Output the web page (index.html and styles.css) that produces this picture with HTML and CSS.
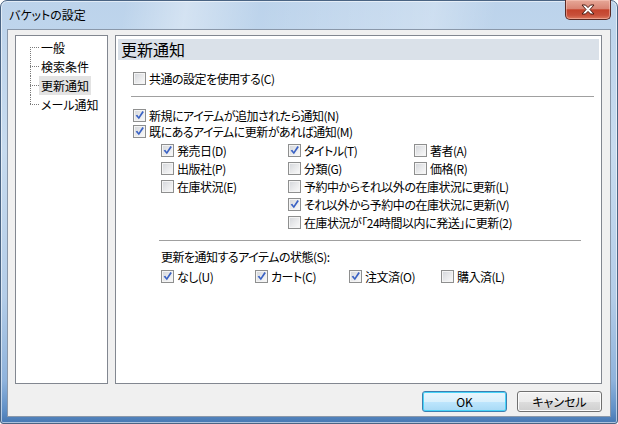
FILE: index.html
```html
<!DOCTYPE html>
<html lang="ja">
<head>
    <meta charset="UTF-8">
    <title>バケットの設定</title>
    <link rel="stylesheet" href="styles.css">
</head>
<body>
    <div class="window">
        <div class="titlebar">
            <span class="title">バケットの設定</span>
            <div class="close">
                <svg width="16" height="11" viewBox="0 0 16 11">
                    <path d="M2 1 H5.5 L8 3.6 L10.5 1 H14 L10 5.5 L14 10 H10.5 L8 7.4 L5.5 10 H2 L6 5.5 Z" fill="#fff" stroke="#4a1a12" stroke-width="1"/>
                </svg>
            </div>
        </div>

        <div class="client">
            <div class="panes">
                <!--左のツリー-->
                <ul class="tree">
                    <li class="first"><span class="branch"></span><span class="node">一般</span></li>
                    <li><span class="branch"></span><span class="node">検索条件</span></li>
                    <li><span class="branch"></span><span class="node selected">更新通知</span></li>
                    <li class="last"><span class="branch"></span><span class="node">メール通知</span></li>
                </ul>

                <!--右のページ-->
                <div class="page">
                    <div class="page-head">更新通知</div>
                    <div class="page-body">
                        <label class="chk row-common"><span class="box"></span>共通の設定を使用する(C)</label>
                        <div class="sep sep-top"></div>
                        <label class="chk row-new"><span class="box on"></span>新規にアイテムが追加されたら通知(N)</label>
                        <label class="chk"><span class="box on"></span>既にあるアイテムに更新があれば通知(M)</label>

                        <div class="fields">
                            <label class="chk"><span class="box on"></span>発売日(D)</label>
                            <label class="chk"><span class="box on"></span>タイトル(T)</label>
                            <label class="chk"><span class="box"></span>著者(A)</label>

                            <label class="chk"><span class="box"></span>出版社(P)</label>
                            <label class="chk"><span class="box"></span>分類(G)</label>
                            <label class="chk"><span class="box"></span>価格(R)</label>

                            <label class="chk"><span class="box"></span>在庫状況(E)</label>
                            <label class="chk wide"><span class="box"></span>予約中からそれ以外の在庫状況に更新(L)</label>

                            <label class="chk wide"><span class="box on"></span>それ以外から予約中の在庫状況に更新(V)</label>
                            <label class="chk wide"><span class="box"></span>在庫状況が「24時間以内に発送」に更新(2)</label>
                        </div>

                        <div class="state">
                            <div class="sep"></div>
                            <div class="caption">更新を通知するアイテムの状態(S):</div>
                            <div class="state-row">
                                <label class="chk"><span class="box on"></span>なし(U)</label>
                                <label class="chk"><span class="box on"></span>カート(C)</label>
                                <label class="chk"><span class="box on"></span>注文済(O)</label>
                                <label class="chk"><span class="box"></span>購入済(L)</label>
                            </div>
                        </div>
                    </div>
                </div>
            </div>

            <div class="buttons">
                <button class="btn default">OK</button>
                <button class="btn">キャンセル</button>
            </div>
        </div>
    </div>
</body>
</html>
```

FILE: styles.css
```css
* {
  margin: 0;
  padding: 0;
  box-sizing: border-box;
  list-style: none;
}

body {
  width: 618px;
  height: 424px;
  background: #fff;
  font-family: "Noto Sans CJK JP", "Liberation Sans", sans-serif;
  font-size: 12px;
  color: #000;
  font-feature-settings: "palt";
  overflow: hidden;
}

/* ウィンドウ枠 */
.window {
  width: 618px;
  height: 424px;
  display: flex;
  flex-direction: column;
  border: 1px solid #4a6483;
  border-radius: 7px 7px 3px 3px;
  padding: 0 6px 6px 6px;
  background: linear-gradient(to bottom, #bcd3eb 0%, #c7dbef 35%, #b4cde8 70%, #8fb3dc 90%, #5f8fc6 97%, #4677b2 100%);
  box-shadow: inset 0 0 0 1px rgba(255, 255, 255, 0.55);
}

.titlebar {
  height: 28px;
  display: flex;
  align-items: flex-start;
  background: linear-gradient(100deg, rgba(255,255,255,0) 20%, rgba(255,255,255,0.35) 30%, rgba(255,255,255,0) 42%, rgba(255,255,255,0.25) 70%, rgba(255,255,255,0) 80%);
  margin: 0 -6px;
  padding: 0 6px;
}

.title {
  margin: 6px 0 0 2px;
  line-height: 16px;
  font-size: 12px;
  color: #000;
}

.close {
  margin-left: auto;
  margin-top: -1px;
  width: 46px;
  height: 20px;
  border: 1px solid #5a2a24;
  border-top: 0;
  border-radius: 0 0 5px 5px;
  background: linear-gradient(to bottom, #e6a898 0%, #d98574 45%, #c4432c 52%, #c8503a 80%, #dd7a5f 100%);
  box-shadow: inset 0 0 0 1px rgba(255, 210, 200, 0.45);
  display: flex;
  align-items: center;
  justify-content: center;
}

/* クライアント領域 */
.client {
  flex: 1;
  display: flex;
  flex-direction: column;
  border: 1px solid #8a98aa;
  background: #f0f0f0;
  padding: 5px 8px 4px 7px;
}

.panes {
  height: 349px;
  display: flex;
  gap: 7px;
}

.tree {
  width: 93px;
  border: 1px solid #828790;
  background: #fff;
  padding: 2px 0 0 14px;
}

.tree li {
  height: 19px;
  display: flex;
  align-items: center;
}

.branch {
  width: 9px;
  height: 19px;
  background-image:
    repeating-linear-gradient(to bottom, #7a7a7a 0 1px, transparent 1px 2px),
    repeating-linear-gradient(to right, #7a7a7a 0 1px, transparent 1px 2px);
  background-repeat: no-repeat;
  background-size: 1px 19px, 9px 1px;
  background-position: 0 0, 0 9px;
}

.tree li.first .branch {
  background-size: 1px 10px, 9px 1px;
  background-position: 0 9px, 0 9px;
}

.tree li.last .branch {
  background-size: 1px 10px, 9px 1px;
  background-position: 0 0, 0 9px;
}

.node {
  padding: 0 2px;
  line-height: 19px;
  height: 19px;
}

.node.selected {
  background: #e3e3e3;
}

.page {
  flex: 1;
  border: 1px solid #828790;
  background: #fff;
  padding: 3px 2px;
}

.page-head {
  height: 21px;
  line-height: 21px;
  padding-left: 3px;
  font-size: 16px;
  background: #dae1e9;
}

.page-body {
  padding: 0 5px 0 15px;
  letter-spacing: -0.5px;
}

/* チェックボックス */
.chk {
  display: flex;
  align-items: center;
  height: 16px;
  gap: 3px;
  white-space: nowrap;
}

.box {
  width: 13px;
  height: 13px;
  flex: none;
  border: 1px solid #8e8f8f;
  background: linear-gradient(135deg, #d2d5da 0%, #e6e7e9 45%, #fbfbfb 100%);
  box-shadow: inset 0 0 0 1px #f4f4f4;
}

.box.on {
  background-image:
    url("data:image/svg+xml;utf8,<svg xmlns='http://www.w3.org/2000/svg' width='11' height='11' viewBox='0 0 11 11'><path d='M1.6 5.4 L3.3 4.7 L4.7 6.7 L8.4 1.1 L9.9 1.9 L4.9 9.3 Z' fill='%233a62c4'/></svg>"),
    linear-gradient(135deg, #d2d5da 0%, #e6e7e9 45%, #fbfbfb 100%);
  background-repeat: no-repeat;
}

.row-common {
  margin-top: 10px;
}

.sep {
  height: 1px;
  background: #a0a0a0;
  margin-left: -2px;
}

.sep-top {
  margin-top: 10px;
}

.row-new {
  margin-top: 10px;
}

.fields {
  margin: 2px 0 0 28px;
  display: grid;
  grid-template-columns: 127px 126px auto;
  grid-auto-rows: 18px;
}

.fields .chk {
  height: 18px;
}

.fields .wide {
  grid-column: 2 / 4;
}

.state {
  margin: 9px 13px 0 28px;
}

.caption {
  margin-top: 8px;
  height: 16px;
  line-height: 16px;
}

.state-row {
  margin-top: 2px;
  display: grid;
  grid-template-columns: 94px 94px 92px auto;
}

.state-row .chk {
  height: 18px;
}

/* ボタン */
.buttons {
  margin-top: 7px;
  height: 21px;
  display: flex;
  justify-content: flex-end;
  gap: 10px;
}

.btn {
  width: 85px;
  height: 21px;
  border: 1px solid #707070;
  border-radius: 3px;
  background: linear-gradient(to bottom, #f2f2f2 0%, #ebebeb 50%, #dddddd 51%, #cfcfcf 100%);
  box-shadow: inset 0 0 0 1px #fbfbfb;
  font-family: "Noto Sans CJK JP", "Liberation Sans", sans-serif;
  font-size: 12px;
  font-feature-settings: "palt";
  color: #000;
  line-height: 18px;
}

.btn.default {
  border-color: #3c7fb1;
  box-shadow: inset 0 0 0 1px #48d4f8;
  background: linear-gradient(to bottom, #eaf6fd 0%, #d9f0fc 50%, #bee6fd 51%, #a7d9f5 100%);
}
```
